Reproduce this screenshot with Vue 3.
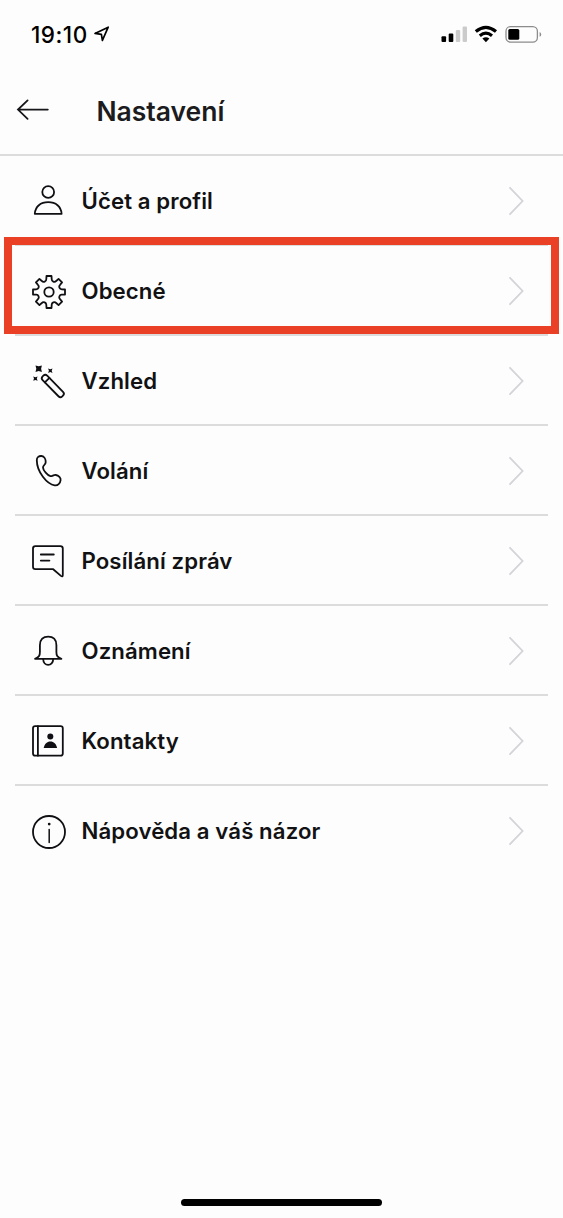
<script setup>
const rows = [
  { id: 'account', label: 'Účet a profil' },
  { id: 'general', label: 'Obecné', highlighted: true },
  { id: 'appearance', label: 'Vzhled' },
  { id: 'calling', label: 'Volání' },
  { id: 'messaging', label: 'Posílání zpráv' },
  { id: 'notifications', label: 'Oznámení' },
  { id: 'contacts', label: 'Kontakty' },
  { id: 'help', label: 'Nápověda a váš názor' }
]

// Eight-toothed gear outline centred on (21, 21)
function gearOutline() {
  const point = (radial, side, angle) => {
    const x = 21 + radial * Math.cos(angle) - side * Math.sin(angle)
    const y = 21 + radial * Math.sin(angle) + side * Math.cos(angle)
    return `${x.toFixed(2)} ${y.toFixed(2)}`
  }
  let d = ''
  for (let i = 0; i < 8; i++) {
    const a = (i * Math.PI) / 4
    const next = a + Math.PI / 4
    d += `${i ? 'L' : 'M'}${point(12.9, -2.7, a)} L${point(16, -2.5, a)} L${point(16, 2.5, a)} L${point(12.9, 2.7, a)} `
    d += `A2.6 2.6 0 0 0 ${point(12.9, -2.7, next)} `
  }
  return d + 'Z'
}
const gear = gearOutline()
</script>

<template>
  <div class="screen">
    <div class="status">
      <span class="time">19:10</span>
      <svg class="location" width="18" height="18" viewBox="0 0 18 18">
        <path d="M2 8.4 L15.2 2.2 L9.4 15.4 L8.4 9.4 Z" />
      </svg>
      <svg class="indicators" width="104" height="24" viewBox="0 0 104 24">
        <rect x="1.5" y="14.3" width="4.6" height="5.8" rx="1" />
        <rect x="8.7" y="11.4" width="4.6" height="8.7" rx="1" />
        <rect class="dim" x="15.8" y="8" width="4.4" height="12.1" rx="1" />
        <rect class="dim" x="22.6" y="4.6" width="4.4" height="15.5" rx="1" />
        <path class="wave" d="M35.8 9.6 Q45.9 1.3 56 9.6" />
        <path class="wave" d="M39.8 13.7 Q45.9 8.7 52 13.7" />
        <path d="M42.4 16.6 Q45.9 14 49.4 16.6 L45.9 20.2 Z" />
        <rect class="shell" x="66" y="4.6" width="31.4" height="15.6" rx="4.6" />
        <rect x="68.3" y="7" width="11" height="10.8" rx="1.6" />
        <path class="cap" d="M99.6 10 Q101.2 10.6 101.2 12.4 Q101.2 14.2 99.6 14.8 Z" />
      </svg>
    </div>

    <header class="header">
      <svg class="back" width="34" height="24" viewBox="0 0 34 24">
        <path d="M31.8 11.6 H2.3 M11.6 2.4 L2 11.6 L11.6 20.8" />
      </svg>
      <h1 class="title">Nastavení</h1>
    </header>

    <ul class="list">
      <li v-for="row in rows" :key="row.id" class="row" :class="row.id">
        <svg class="icon" width="40" height="40" viewBox="0 0 40 40">
          <g v-if="row.id === 'account'">
            <circle cx="20.2" cy="11" r="5.9" />
            <path d="M6.8 32.8 C7.3 25.5 12.6 21.2 20.2 21.2 S33.1 25.5 33.6 32.8 Z" />
          </g>
          <g v-else-if="row.id === 'general'">
            <path :d="gear" />
            <circle cx="21" cy="21" r="4.7" />
          </g>
          <g v-else-if="row.id === 'appearance'">
            <g transform="translate(17.6 17.6) rotate(45.5)">
              <rect x="-3.7" y="-3.2" width="28" height="6.4" rx="2.7" />
              <path d="M2.2 -3.2 V3.2" />
            </g>
            <path class="solid" d="M7.5 4.5 L10.7 5.3 L13.9 4.5 L13.1 7.7 L13.9 10.9 L10.7 10.1 L7.5 10.9 L8.3 7.7 Z" />
            <path class="solid" d="M20.1 7.5 L22.3 8.3 L24.5 7.5 L23.7 9.7 L24.5 11.9 L22.3 11.1 L20.1 11.9 L20.9 9.7 Z" />
            <path class="solid" d="M5.2 15.4 L7.4 16.2 L9.6 15.4 L8.8 17.6 L9.6 19.8 L7.4 19 L5.2 19.8 L6 17.6 Z" />
          </g>
          <g v-else-if="row.id === 'calling'">
            <path d="M8.8 9.2 C8.7 6.2 11 4.8 13.5 5 C16.4 5.2 17.8 8.4 17.7 11.2 C17.6 13.7 15 14.3 15 16.5 C15 19.4 19.7 24.6 22.4 25.2 C24.3 25.5 25.5 23.7 27.8 24 C30.6 24.4 33 26.8 32.6 29.2 C32.2 32.4 29.8 34.9 26.7 34.4 C19 33.2 8.9 21 8.8 9.2 Z" />
          </g>
          <g v-else-if="row.id === 'messaging'">
            <path d="M7.4 5.1 H32.4 Q34.8 5.1 34.8 7.5 V34 Q34.8 36.3 32.9 34.9 L25.2 28.2 H7.4 Q5 28.2 5 25.8 V7.5 Q5 5.1 7.4 5.1 Z" />
            <path d="M12.8 13.5 H25.8 M12.8 19.6 H21.4" />
          </g>
          <g v-else-if="row.id === 'notifications'">
            <path d="M7 27.8 H33.4 C29 26.2 28.4 24.4 28.4 21 V14.2 C28.4 8.4 25.2 5.6 20.2 5.6 S11.9 8.4 11.9 14.2 V21 C11.9 24.4 11.3 26.2 7 27.8 Z" />
            <path d="M15.2 28 C15.2 35.9 25.2 35.9 25.2 28" />
          </g>
          <g v-else-if="row.id === 'contacts'">
            <rect x="5" y="5.1" width="29.8" height="29.6" rx="2.2" />
            <path d="M9.9 5.1 V34.7" />
            <circle class="solid" cx="22.3" cy="15.6" r="3" />
            <path class="solid" d="M15.7 27.1 C16.6 22.8 19 20.6 22.4 20.6 S28.2 22.8 29.1 27.1 Z" />
          </g>
          <g v-else>
            <circle cx="21" cy="21" r="16" />
            <circle class="solid" cx="21.2" cy="13.1" r="1.4" />
            <path class="stem" d="M21.2 18.6 V31.6" />
          </g>
        </svg>
        <span class="label">{{ row.label }}</span>
        <svg class="chevron" width="18" height="30" viewBox="0 0 18 30">
          <path d="M2 1.8 L14.6 15 L2 28.2" />
        </svg>
        <div v-if="row.highlighted" class="highlight"></div>
      </li>
    </ul>

    <div class="home"></div>
  </div>
</template>

<style>
body {
  background: #fdfdfd;
}
</style>

<style scoped>
.screen {
  box-sizing: border-box;
  display: flex;
  flex-direction: column;
  width: 563px;
  height: 1218px;
  padding-bottom: 12px;
  background: #fdfdfd;
  color: #121214;
  font-family: Inter, "Liberation Sans", sans-serif;
  overflow: hidden;
}
.status {
  display: flex;
  align-items: center;
  height: 68px;
  padding: 0 19px 0 31px;
}
.time {
  width: 62px;
  padding-top: 2px;
  font-size: 22.5px;
  font-weight: 500;
  line-height: 30px;
  letter-spacing: 0.5px;
  color: #000;
}
.location {
  fill: none;
  stroke: #000;
  stroke-width: 1.7;
  stroke-linejoin: round;
}
.indicators {
  margin-left: auto;
  fill: #000;
}
.dim {
  fill: #cbcbcb;
}
.wave {
  fill: none;
  stroke: #000;
  stroke-width: 3.2;
}
.shell {
  fill: none;
  stroke: #8c8c8c;
  stroke-width: 1.3;
}
.cap {
  fill: #8c8c8c;
}
.header {
  box-sizing: border-box;
  display: flex;
  align-items: center;
  height: 88px;
  padding: 0 16px;
  border-bottom: 2px solid #dcdcdd;
}
.back {
  margin: -3px 46px 0 0;
  fill: none;
  stroke: #15151a;
  stroke-width: 1.8;
  stroke-linecap: round;
}
.title {
  margin: -1px 0 0 0.4px;
  font-size: 26.5px;
  font-weight: 600;
  line-height: 32px;
  color: #1b1b20;
}
.list {
  margin: 0;
  padding: 0 15px;
  list-style: none;
}
.row {
  position: relative;
  box-sizing: border-box;
  display: flex;
  align-items: flex-start;
  height: 90px;
  padding: 25px 22px 0 13px;
  border-bottom: 2px solid #dcdcdd;
}
.row:last-child {
  border-bottom: 0;
}
.icon {
  margin-right: 13px;
  fill: none;
  stroke: #101014;
  stroke-width: 1.8;
  stroke-linecap: round;
  stroke-linejoin: round;
}
.solid {
  fill: #101014;
  stroke: none;
}
.stem {
  stroke-width: 1.5;
}
.label {
  padding-left: 0.5px;
  font-size: 22.2px;
  font-weight: 600;
  line-height: 40px;
  letter-spacing: 0.1px;
  white-space: nowrap;
}
.chevron {
  margin: 5px 0 0 auto;
  fill: none;
  stroke: #d3d3d8;
  stroke-width: 1.8;
  stroke-linecap: round;
}
.highlight {
  position: absolute;
  box-sizing: border-box;
  top: -9px;
  left: -11px;
  width: 555px;
  height: 97px;
  border: 8px solid #ea4126;
}
.home {
  align-self: center;
  width: 201px;
  height: 7px;
  margin-top: auto;
  border-radius: 4px;
  background: #000;
}
</style>
